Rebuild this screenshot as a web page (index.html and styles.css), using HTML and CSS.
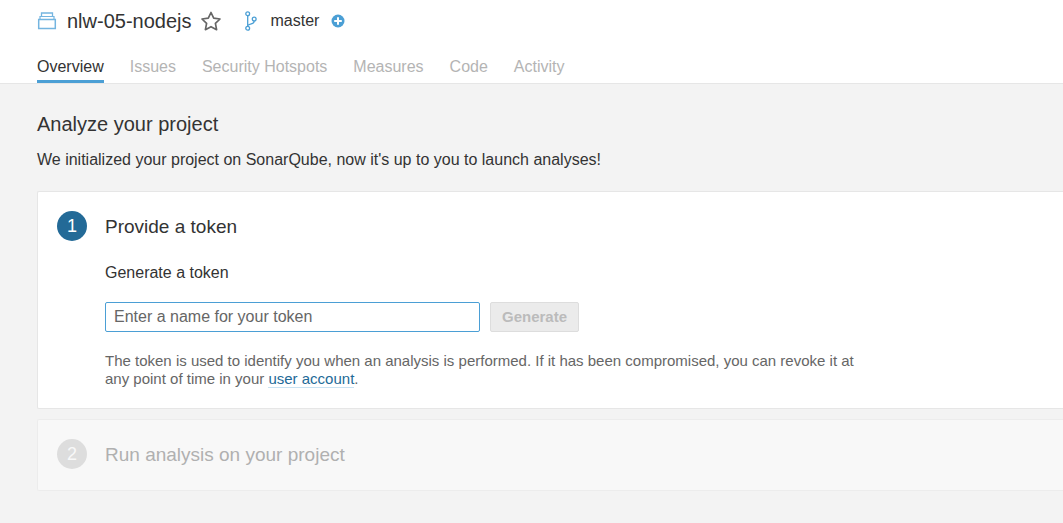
FILE: index.html
```html
<!DOCTYPE html>
<html lang="en">
<head>
<meta charset="utf-8">
<title>nlw-05-nodejs</title>
<link rel="stylesheet" href="styles.css">
</head>
<body>
<header class="header">
  <div class="project">
    <svg class="icon-project" width="20" height="20" viewBox="0 0 20 20" fill="none" stroke="#74b5e0" aria-hidden="true">
      <path d="M1.700 8.600h16.600v8.900H1.700z" stroke-width="1.500"/>
      <path d="M3 8V5.500h14V8" stroke-width="1.200"/>
      <path d="M4.500 5V2h11v3" stroke-width="1.300"/>
    </svg>
    <h1 class="project-name">nlw-05-nodejs</h1>
    <button class="icon-button favorite" type="button" aria-label="Add to favorites">
      <svg width="20" height="20" viewBox="0 0 20 20" fill="none" stroke="#666" stroke-width="1.700" stroke-linejoin="round" aria-hidden="true">
        <path d="M10 1.500l2.700 5.600 6.300.9-4.600 4.400 1.200 6.300L10 15.700l-5.600 3 1.200-6.300L1 8l6.300-.9z"/>
      </svg>
    </button>
    <svg class="icon-branch" width="12" height="20" viewBox="0 0 12 20" fill="none" stroke="#4b9fd5" stroke-width="1.300" aria-hidden="true">
      <circle cx="2.700" cy="2.700" r="1.900"/>
      <circle cx="2.700" cy="17.300" r="1.900"/>
      <circle cx="9.200" cy="8" r="1.900"/>
      <path d="M2.700 4.600v10.800M9.200 9.900c0 3.400-3.500 2.300-6 4.300"/>
    </svg>
    <span class="branch-name">master</span>
    <button class="icon-button" type="button" aria-label="Add branch">
      <svg width="14" height="14" viewBox="0 0 14 14" aria-hidden="true">
        <circle cx="7" cy="7" r="6.500" fill="#4b9fd5"/>
        <path d="M7 3.200v7.600M3.200 7h7.600" stroke="#fff" stroke-width="2"/>
      </svg>
    </button>
  </div>
  <nav class="tabs">
    <a class="tab tab-active" href="#overview">Overview</a>
    <a class="tab" href="#issues">Issues</a>
    <a class="tab" href="#hotspots">Security Hotspots</a>
    <a class="tab" href="#measures">Measures</a>
    <a class="tab" href="#code">Code</a>
    <a class="tab" href="#activity">Activity</a>
  </nav>
</header>
<main class="page">
  <h2 class="page-title">Analyze your project</h2>
  <p class="page-description">We initialized your project on SonarQube, now it's up to you to launch analyses!</p>
  <section class="step">
    <span class="step-number">1</span>
    <div class="step-content">
      <h3 class="step-title">Provide a token</h3>
      <form class="token-form">
        <label class="token-label" for="token">Generate a token</label>
        <div class="token-row">
          <input class="token-input" id="token" type="text" placeholder="Enter a name for your token">
          <button class="generate" type="submit" disabled>Generate</button>
        </div>
        <p class="note">The token is used to identify you when an analysis is performed. If it has been compromised, you can revoke it at any point of time in your <a class="note-link" href="#account">user account</a>.</p>
      </form>
    </div>
  </section>
  <section class="step step-disabled">
    <span class="step-number">2</span>
    <div class="step-content">
      <h3 class="step-title">Run analysis on your project</h3>
    </div>
  </section>
</main>
</body>
</html>
```
FILE: styles.css
```css
* {
  box-sizing: border-box;
}

body {
  margin: 0;
  background: #f3f3f3;
  color: #333;
  font: 16px/20px "Liberation Sans", Arial, sans-serif;
}

h1, h2, h3, p {
  margin: 0;
  font-weight: 400;
}

svg {
  display: block;
}

.header {
  padding: 9px 37px 0;
  background: #fff;
  border-bottom: 1px solid #e6e6e6;
}

.project {
  display: flex;
  align-items: center;
  height: 24px;
}

.project-name {
  margin: 0 9px 0 10px;
  font-size: 20px;
  line-height: 24px;
}

.icon-button {
  padding: 0;
  border: 0;
  background: none;
}

.icon-branch {
  margin: 0 14px 0 24px;
}

.branch-name {
  margin-right: 12px;
}

.tabs {
  display: flex;
  gap: 26px;
  margin-top: 20px;
}

.tab {
  padding: 4px 0 3px;
  border-bottom: 3px solid transparent;
  color: #b4b4b4;
  text-decoration: none;
}

.tab-active {
  border-color: #4b9fd5;
  color: #333;
}

.page {
  padding: 28px 0 32px 37px;
}

.page-title {
  font-size: 20px;
  line-height: 24px;
}

.page-description {
  margin: 14px 0 21px;
}

.step {
  display: flex;
  gap: 18px;
  margin-bottom: 10px;
  padding: 19px 19px 20px;
  border: 1px solid #e6e6e6;
  border-right: 0;
  border-radius: 2px 0 0 2px;
  background: #fff;
}

.step-number {
  flex: none;
  width: 30px;
  height: 30px;
  border-radius: 50%;
  background: #236a97;
  color: #fff;
  font-size: 18px;
  line-height: 30px;
  text-align: center;
}

.step-title {
  font-size: 19px;
  line-height: 31px;
}

.token-form {
  max-width: 750px;
  padding-top: 21px;
}

.token-label {
  display: block;
}

.token-row {
  display: flex;
  gap: 10px;
  margin: 19px 0 20px;
}

.token-input {
  width: 375px;
  height: 30px;
  padding: 0 8px;
  border: 1px solid #4b9fd5;
  border-radius: 2px;
  background: #fff;
  color: #333;
  font: inherit;
}

.token-input::placeholder {
  color: #666;
}

.generate {
  height: 30px;
  padding: 0 11px;
  border: 1px solid #ddd;
  border-radius: 2px;
  background: #ebebeb;
  color: #bbb;
  font: bold 15px/20px "Liberation Sans", Arial, sans-serif;
}

.note {
  color: #666;
  font-size: 15px;
  line-height: 18px;
}

.note-link {
  border-bottom: 1px solid #cae3f2;
  color: #236a97;
  text-decoration: none;
}

.step-disabled {
  border-color: #ececec;
  background: #f8f8f8;
  color: #b0b0b0;
}

.step-disabled .step-number {
  background: #ddd;
  color: #f8f8f8;
}
```
